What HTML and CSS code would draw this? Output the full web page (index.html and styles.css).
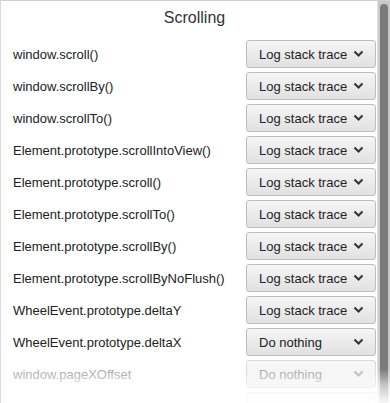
FILE: index.html
```
<!DOCTYPE html>
<html lang="en">
<head>
    <meta charset="UTF-8">
    <title>Scrolling</title>
    <link rel="stylesheet" href="styles.css">
</head>
<body>
    <div class="panel">
        <div class="content">
            <h1 class="title">Scrolling</h1>
            <ul class="rows">
                <li class="row"><span class="label">window.scroll()</span><div class="select">Log stack trace<svg class="chev" width="11" height="8" viewBox="0 0 11 8"><path d="M1.5 1.5 L5.5 5.5 L9.5 1.5" fill="none" stroke="currentColor" stroke-width="2"/></svg></div></li>
                <li class="row"><span class="label">window.scrollBy()</span><div class="select">Log stack trace<svg class="chev" width="11" height="8" viewBox="0 0 11 8"><path d="M1.5 1.5 L5.5 5.5 L9.5 1.5" fill="none" stroke="currentColor" stroke-width="2"/></svg></div></li>
                <li class="row"><span class="label">window.scrollTo()</span><div class="select">Log stack trace<svg class="chev" width="11" height="8" viewBox="0 0 11 8"><path d="M1.5 1.5 L5.5 5.5 L9.5 1.5" fill="none" stroke="currentColor" stroke-width="2"/></svg></div></li>
                <li class="row"><span class="label">Element.prototype.scrollIntoView()</span><div class="select">Log stack trace<svg class="chev" width="11" height="8" viewBox="0 0 11 8"><path d="M1.5 1.5 L5.5 5.5 L9.5 1.5" fill="none" stroke="currentColor" stroke-width="2"/></svg></div></li>
                <li class="row"><span class="label">Element.prototype.scroll()</span><div class="select">Log stack trace<svg class="chev" width="11" height="8" viewBox="0 0 11 8"><path d="M1.5 1.5 L5.5 5.5 L9.5 1.5" fill="none" stroke="currentColor" stroke-width="2"/></svg></div></li>
                <li class="row"><span class="label">Element.prototype.scrollTo()</span><div class="select">Log stack trace<svg class="chev" width="11" height="8" viewBox="0 0 11 8"><path d="M1.5 1.5 L5.5 5.5 L9.5 1.5" fill="none" stroke="currentColor" stroke-width="2"/></svg></div></li>
                <li class="row"><span class="label">Element.prototype.scrollBy()</span><div class="select">Log stack trace<svg class="chev" width="11" height="8" viewBox="0 0 11 8"><path d="M1.5 1.5 L5.5 5.5 L9.5 1.5" fill="none" stroke="currentColor" stroke-width="2"/></svg></div></li>
                <li class="row"><span class="label">Element.prototype.scrollByNoFlush()</span><div class="select">Log stack trace<svg class="chev" width="11" height="8" viewBox="0 0 11 8"><path d="M1.5 1.5 L5.5 5.5 L9.5 1.5" fill="none" stroke="currentColor" stroke-width="2"/></svg></div></li>
                <li class="row"><span class="label">WheelEvent.prototype.deltaY</span><div class="select">Log stack trace<svg class="chev" width="11" height="8" viewBox="0 0 11 8"><path d="M1.5 1.5 L5.5 5.5 L9.5 1.5" fill="none" stroke="currentColor" stroke-width="2"/></svg></div></li>
                <li class="row"><span class="label">WheelEvent.prototype.deltaX</span><div class="select">Do nothing<svg class="chev" width="11" height="8" viewBox="0 0 11 8"><path d="M1.5 1.5 L5.5 5.5 L9.5 1.5" fill="none" stroke="currentColor" stroke-width="2"/></svg></div></li>
                <li class="row row-off"><span class="label">window.pageXOffset</span><div class="select">Do nothing<svg class="chev" width="11" height="8" viewBox="0 0 11 8"><path d="M1.5 1.5 L5.5 5.5 L9.5 1.5" fill="none" stroke="currentColor" stroke-width="2"/></svg></div></li>
                <li class="row row-off"><span class="label"></span><div class="select"></div></li>
            </ul>
        </div>
        <div class="scrollbar"><div class="thumb"></div></div>
        <div class="fade"></div>
    </div>
</body>
</html>
```

FILE: styles.css
```
*{ padding: 0; margin: 0; box-sizing: border-box; }
ul,li{ list-style: none; }

body{
    width: 390px;
    height: 403px;
    overflow: hidden;
    background: #fff;
    font-family: "Liberation Sans", Arial, sans-serif;
    color: #222;
}
.panel{
    position: relative;
    display: flex;
    height: 403px;
    border-left: 1px solid #dadada;
    border-top: 1px solid #d0d0d0;
    overflow: hidden;
}
.content{
    flex: 1;
    padding: 0 1px 0 12px;
}
.title{
    height: 39px;
    padding-top: 8px;
    font-size: 16px;
    font-weight: normal;
    text-align: center;
    color: #333;
}
.row{
    display: flex;
    align-items: center;
    justify-content: space-between;
    height: 28px;
    margin-bottom: 4px;
    font-size: 13px;
}
.select{
    display: flex;
    align-items: center;
    justify-content: space-between;
    width: 130px;
    height: 28px;
    padding: 0 11px 0 12px;
    border: 1px solid #bdbdbd;
    border-radius: 3px;
    background: linear-gradient(#f6f6f6, #e1e1e1);
    font-size: 13px;
    color: #222;
}
.chev{
    color: #333;
}
.row-off .label{ color: #a4a4a4; }
.row-off .select{
    color: #a4a4a4;
    border-color: #d8d8d8;
    background: linear-gradient(#f8f8f8, #efefef);
}
.row-off .chev{ color: #b4b4b4; }
.scrollbar{
    width: 13px;
    background: #c9c9c9;
    border-left: 1px solid #e2e2e2;
    padding: 3px 2px 0 2px;
}
.thumb{
    height: 100%;
    background: #7b7b7b;
    border-radius: 4px 4px 0 0;
}
.fade{
    position: absolute;
    left: 0;
    right: 0;
    bottom: 0;
    height: 34px;
    background: linear-gradient(rgba(255,255,255,0), rgba(255,255,255,0.6) 50%, rgba(255,255,255,0.95));
}
```
